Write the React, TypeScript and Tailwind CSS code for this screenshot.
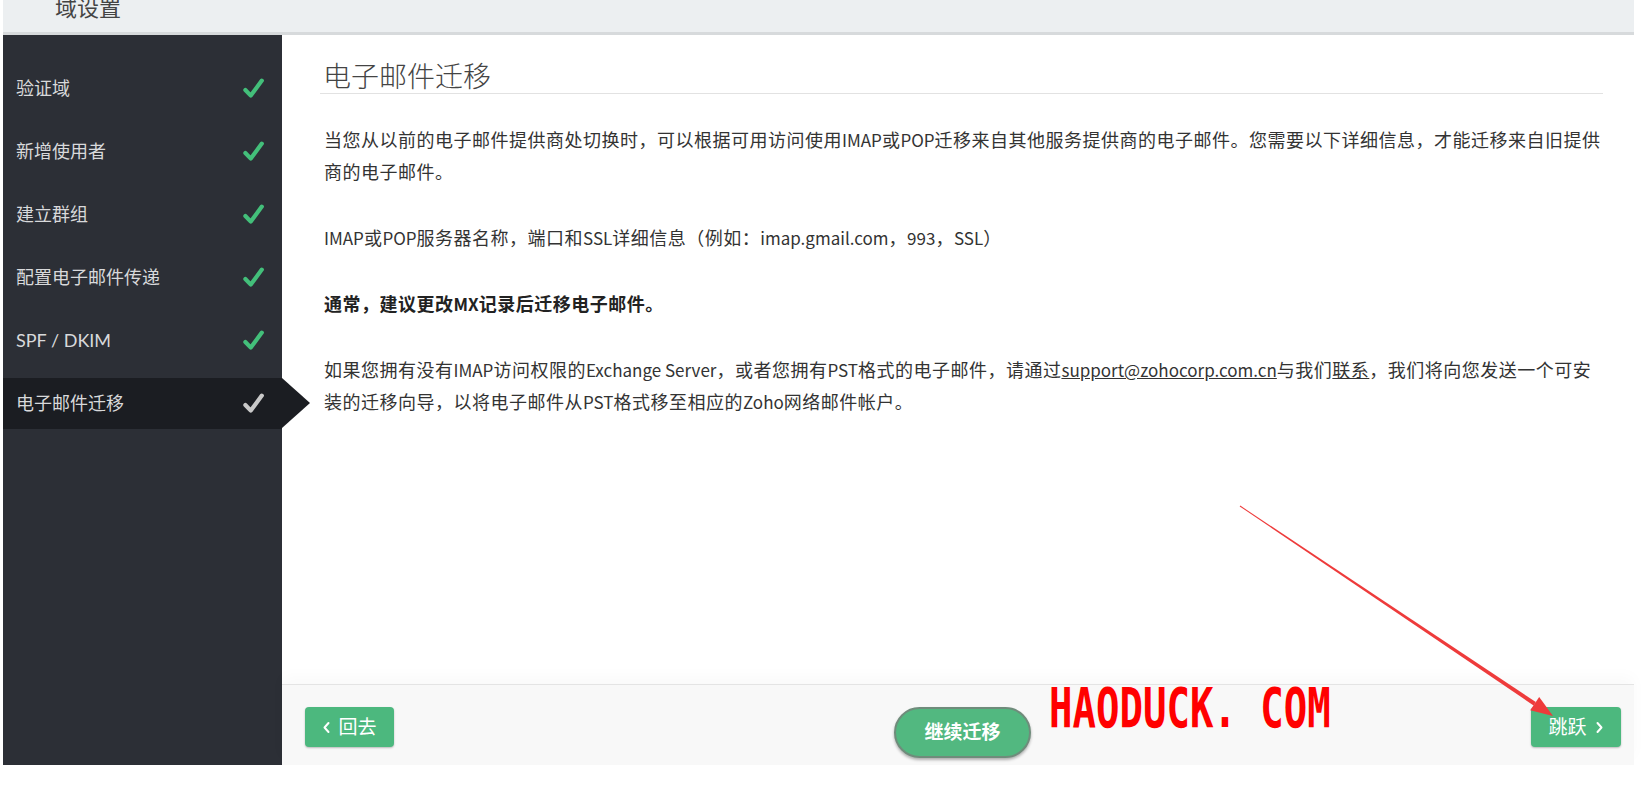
import React from "react";

const steps = [
  { label: "验证域", done: true },
  { label: "新增使用者", done: true },
  { label: "建立群组", done: true },
  { label: "配置电子邮件传递", done: true },
  { label: "SPF / DKIM", done: true },
  { label: "电子邮件迁移", done: true, active: true },
];

function Check({ color }: { color: string }) {
  return (
    <svg width="25" height="25" viewBox="0 0 24 24" fill="none">
      <path d="M4.2 13.4 L9.4 18.8 L20 4.4" stroke={color} strokeWidth="4" strokeLinecap="round" strokeLinejoin="round" />
    </svg>
  );
}

function Chevron({ dir }: { dir: "left" | "right" }) {
  return (
    <svg width="9" height="13" viewBox="0 0 9 13" fill="none">
      <path
        d={dir === "left" ? "M6.5 2 L2.5 6.5 L6.5 11" : "M2.5 2 L6.5 6.5 L2.5 11"}
        stroke="white"
        strokeWidth="2"
        strokeLinecap="round"
        strokeLinejoin="round"
      />
    </svg>
  );
}

// latin runs sit a bit smaller than the CJK text
function En({ children, link }: { children: React.ReactNode; link?: boolean }) {
  return <span className={`text-[17px] leading-none tracking-normal ${link ? "underline" : ""}`}>{children}</span>;
}

export default function App() {
  return (
    <div className="relative w-[1648px] h-[798px] overflow-hidden bg-white text-[#333] font-['Lato','Noto_Sans_CJK_SC',sans-serif]">
      <div className="ml-[3px] w-[1631px]">
        {/* top bar */}
        <header className="h-[35px] overflow-hidden bg-[#eceff1] border-b-[3px] border-[#d7dadc]">
          <div className="-mt-[7px] pl-[52px] text-[22px] leading-[30px] text-[#444]">域设置</div>
        </header>

        <div className="flex h-[730px]">
          {/* steps */}
          <aside className="w-[279px] bg-[#2c2f36] pt-[22px]">
            {steps.map((s) => (
              <div key={s.label} className="h-[63px] flex items-center">
                <div
                  className={`relative w-full h-[51px] flex items-center justify-between pl-[13px] pr-[16px] ${
                    s.active ? "bg-[#1b1d22]" : ""
                  }`}
                >
                  <span className="text-[18px] text-[#d8d9db]">{s.label}</span>
                  <Check color={s.active ? "#c9c9c9" : "#43bf7a"} />
                  {s.active && (
                    <div className="absolute left-full top-0 w-0 h-0 border-y-[25.5px] border-y-transparent border-l-[28px] border-l-[#1b1d22]" />
                  )}
                </div>
              </div>
            ))}
          </aside>

          {/* content */}
          <main className="flex-1 flex flex-col">
            <div className="flex-1 pt-[23px]">
              <h1 className="ml-[38px] mr-[31px] pl-[3px] text-[28px] leading-[35px] font-light text-[#444] border-b border-[#e2e2e2] font-['Noto_Sans_CJK_SC',sans-serif]">
                电子邮件迁移
              </h1>
              <div className="ml-[42px] w-[1279px] mt-[29px] text-[18px] tracking-[0.5px] leading-[32px] font-['Noto_Sans_CJK_SC',sans-serif]">
                <p className="mb-[34px]">
                  当您从以前的电子邮件提供商处切换时，可以根据可用访问使用<En>IMAP</En>或<En>POP</En>
                  迁移来自其他服务提供商的电子邮件。您需要以下详细信息，才能迁移来自旧提供商的电子邮件。
                </p>
                <p className="mb-[34px]">
                  <En>IMAP</En>或<En>POP</En>服务器名称，端口和<En>SSL</En>详细信息（例如：<En>imap.gmail.com</En>，
                  <En>993</En>，<En>SSL</En>）
                </p>
                <p className="mb-[34px] font-bold text-[#222]">
                  通常，建议更改<En>MX</En>记录后迁移电子邮件。
                </p>
                <p>
                  如果您拥有没有<En>IMAP</En>访问权限的<En>Exchange Server</En>，或者您拥有<En>PST</En>
                  格式的电子邮件，请通过<En link>support@zohocorp.com.cn</En>与我们<a className="underline">联系</a>
                  ，我们将向您发送一个可安装的迁移向导，以将电子邮件从<En>PST</En>格式移至相应的<En>Zoho</En>
                  网络邮件帐户。
                </p>
              </div>
            </div>

            <footer className="h-[81px] flex items-start justify-between pt-[22px] pl-[23px] pr-[13px] bg-[#f8f8f8] border-t border-[#e4e4e4] shadow-[0_-8px_14px_rgba(0,0,0,0.025)]">
              <button className="w-[89px] h-[40px] flex items-center justify-center gap-[7px] rounded-[4px] bg-[#4cb87e] text-white text-[19px] shadow-[0_1px_2px_rgba(0,0,0,0.25)]">
                <Chevron dir="left" />
                回去
              </button>
              <button className="w-[137px] h-[51px] rounded-full border-2 border-[#6f8c7b] bg-[#52b880] text-white text-[19px] font-bold shadow-[0_2px_3px_rgba(0,0,0,0.3)]">
                继续迁移
              </button>
              <button className="w-[90px] h-[40px] flex items-center justify-center gap-[8px] rounded-[4px] bg-[#4cb87e] text-white text-[19px] shadow-[0_1px_2px_rgba(0,0,0,0.25)]">
                跳跃
                <Chevron dir="right" />
              </button>
            </footer>
          </main>
        </div>
      </div>

      {/* watermark */}
      <div className="absolute left-[1049px] top-[681px] origin-top scale-y-[1.4] text-[39px] leading-none font-bold text-[#ff0000] font-['DejaVu_Sans_Mono',monospace] whitespace-pre">
        HAODUCK. COM
      </div>

      {/* annotation arrow */}
      <svg className="absolute inset-0 z-10 pointer-events-none" width="1648" height="798" viewBox="0 0 1648 798">
        <polygon points="1239.7,506.4 1240.3,505.6 1535.8,702.0 1533.6,705.4" fill="#ee3b3b" />
        <polygon points="1553,716 1530.2,710.3 1539.2,697.1" fill="#ee3b3b" />
      </svg>
    </div>
  );
}
